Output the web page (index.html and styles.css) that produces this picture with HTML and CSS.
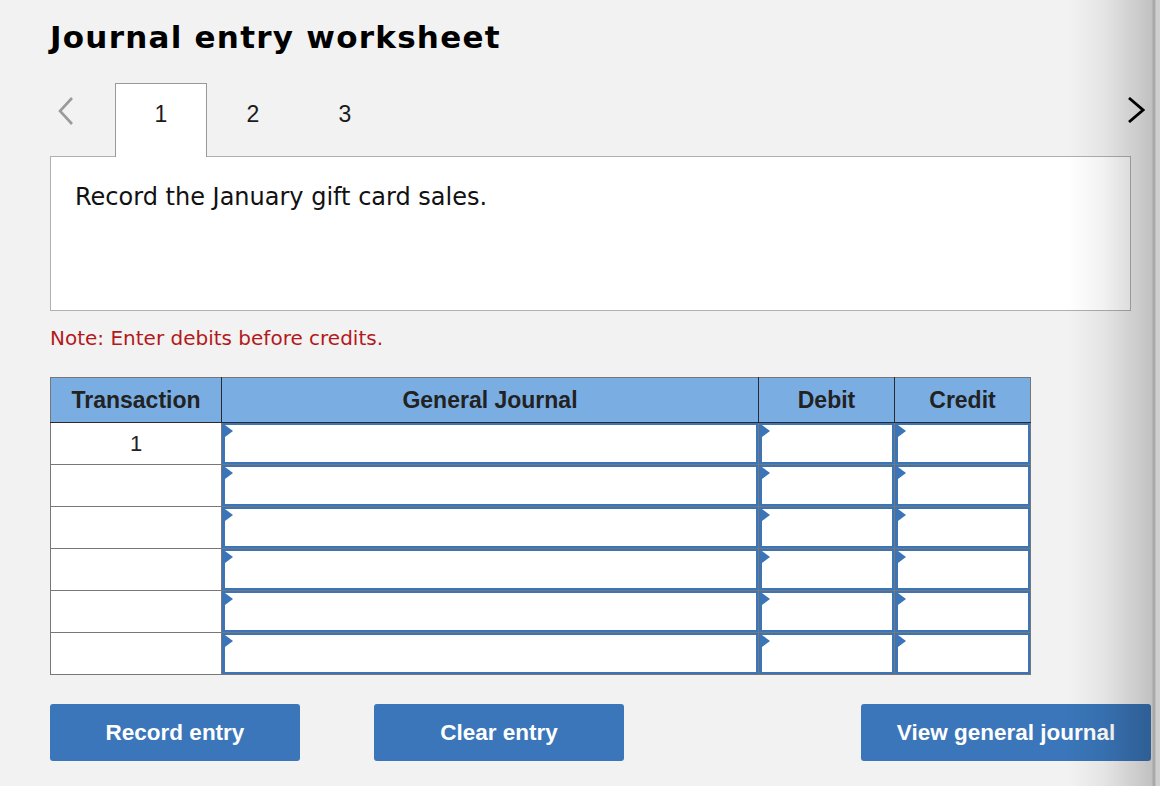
FILE: index.html
```html
<!DOCTYPE html>
<html lang="en">
<head>
    <meta charset="UTF-8">
    <meta name="viewport" content="width=device-width, initial-scale=1.0">
    <title>Journal entry worksheet</title>
    <link rel="stylesheet" href="styles.css">
</head>
<body>
    <div class="worksheet">
        <h1>Journal entry worksheet</h1>

        <div class="tabs">
            <span class="nav prev">
                <svg width="16" height="28" viewBox="0 0 16 28"><polyline points="14,1 2,14 14,27" fill="none" stroke="#9a9a9a" stroke-width="2.6"/></svg>
            </span>
            <span class="tab active">1</span>
            <span class="tab">2</span>
            <span class="tab">3</span>
            <span class="nav next">
                <svg width="18" height="26" viewBox="0 0 18 26"><polyline points="2,1 16,13 2,25" fill="none" stroke="#000" stroke-width="2.8"/></svg>
            </span>
        </div>

        <div class="question">
            Record the January gift card sales.
        </div>

        <p class="note">Note: Enter debits before credits.</p>

        <table class="journal">
            <thead>
                <tr>
                    <th class="col-trans">Transaction</th>
                    <th class="col-account">General Journal</th>
                    <th class="col-amount">Debit</th>
                    <th class="col-amount">Credit</th>
                </tr>
            </thead>
            <tbody>
                <tr>
                    <td class="trans">1</td>
                    <td><div class="field"></div></td>
                    <td><div class="field"></div></td>
                    <td><div class="field"></div></td>
                </tr>
                <tr>
                    <td class="trans"></td>
                    <td><div class="field"></div></td>
                    <td><div class="field"></div></td>
                    <td><div class="field"></div></td>
                </tr>
                <tr>
                    <td class="trans"></td>
                    <td><div class="field"></div></td>
                    <td><div class="field"></div></td>
                    <td><div class="field"></div></td>
                </tr>
                <tr>
                    <td class="trans"></td>
                    <td><div class="field"></div></td>
                    <td><div class="field"></div></td>
                    <td><div class="field"></div></td>
                </tr>
                <tr>
                    <td class="trans"></td>
                    <td><div class="field"></div></td>
                    <td><div class="field"></div></td>
                    <td><div class="field"></div></td>
                </tr>
                <tr>
                    <td class="trans"></td>
                    <td><div class="field"></div></td>
                    <td><div class="field"></div></td>
                    <td><div class="field"></div></td>
                </tr>
            </tbody>
        </table>

        <div class="actions">
            <button class="btn">Record entry</button>
            <button class="btn">Clear entry</button>
            <button class="btn wide">View general journal</button>
        </div>
    </div>

    <!-- shadow of the side panel edge -->
    <div class="edge-shadow"></div>
</body>
</html>
```

FILE: styles.css
```css
body {
    margin: 0;
    padding: 0;
    background-color: #f2f2f2;
    font-family: "DejaVu Sans", Verdana, sans-serif;
    color: #111;
}
.worksheet {
    padding: 0 9px 0 50px;
}
h1 {
    margin: 0;
    padding-top: 19px;
    font-size: 31px;
    line-height: 36px;
    font-weight: bold;
    letter-spacing: 1.25px;
    color: #000;
}
.tabs {
    display: flex;
    height: 74px;
    margin-top: 28px;
    font-family: "Liberation Sans", Arial, sans-serif;
    font-size: 23px;
    color: #1a1a1a;
}
.nav {
    padding-top: 14px;
}
.prev {
    width: 57px;
    padding-left: 8px;
}
.next {
    margin-left: auto;
    margin-right: 6px;
}
.tab {
    width: 92px;
    box-sizing: border-box;
    padding-top: 17px;
    line-height: 26px;
    text-align: center;
    border: 1px solid transparent;
    border-bottom: none;
}
.tab.active {
    position: relative;
    z-index: 1;
    background: #fff;
    border-color: #999;
}
.question {
    margin-top: -1px;
    margin-right: 20px;
    padding: 26px 24px 0;
    box-sizing: border-box;
    height: 155px;
    background: #fff;
    border: 1px solid #b0b0b0;
    font-size: 24px;
    line-height: 28px;
    color: #111;
}
.note {
    margin: 15px 0 0;
    font-size: 20px;
    line-height: 24px;
    color: #b3191b;
}
.journal {
    margin-top: 27px;
    width: 980px;
    border-collapse: collapse;
    table-layout: fixed;
    background: #fff;
    font-family: "Liberation Sans", Arial, sans-serif;
}
.journal th {
    height: 44px;
    padding: 0;
    background-color: #7aaee3;
    border: 1px solid #2a2a2a;
    border-top-color: #777;
    font-size: 23px;
    font-weight: bold;
    color: #222;
}
.journal thead tr th:first-child {
    border-left-color: #777;
}
.journal thead tr th:last-child {
    border-right-color: #777;
}
.col-trans {
    width: 170px;
}
.col-account {
    width: 536px;
}
.col-amount {
    width: 135px;
}
.journal td {
    height: 41px;
    padding: 0;
    border: 1px solid #777;
    vertical-align: top;
}
.journal td.trans {
    vertical-align: middle;
    text-align: center;
    font-size: 22px;
    color: #222;
}
.field {
    position: relative;
    height: 41px;
    box-sizing: border-box;
    border: 2px solid #3b75b8;
    border-left-width: 3px;
    background: #fff;
}
.field::before {
    content: "";
    position: absolute;
    left: 0;
    top: 0;
    border-top: 6px solid transparent;
    border-bottom: 6px solid transparent;
    border-left: 8px solid #3b75b8;
}
.actions {
    display: flex;
    margin-top: 29px;
}
.btn {
    width: 250px;
    height: 57px;
    margin-right: 74px;
    background-color: #3a76b9;
    color: #fff;
    border: none;
    border-radius: 3px;
    font-family: "Liberation Sans", Arial, sans-serif;
    font-size: 22.5px;
    font-weight: bold;
    cursor: pointer;
}
.btn.wide {
    width: 290px;
    margin-left: auto;
    margin-right: 0;
}
.edge-shadow {
    position: fixed;
    top: 0;
    right: 0;
    bottom: 0;
    width: 92px;
    pointer-events: none;
    background: linear-gradient(to right,
        rgba(0, 0, 0, 0) 0px,
        rgba(0, 0, 0, 0.05) 35px,
        rgba(0, 0, 0, 0.2) 84px,
        rgba(0, 0, 0, 0.3) 85px,
        rgba(0, 0, 0, 0.3) 87px,
        rgba(0, 0, 0, 0.14) 88px,
        rgba(0, 0, 0, 0.14) 92px);
}
```
